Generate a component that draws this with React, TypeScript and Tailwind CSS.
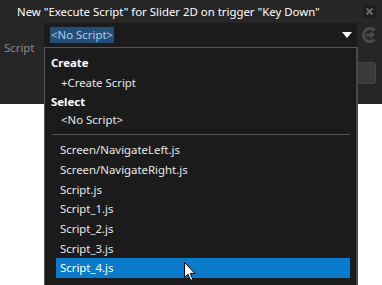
import React from "react";

const font = { fontFamily: '"Noto Sans", "Open Sans", sans-serif' };

function Cursor() {
  return (
    <svg width="13" height="20" viewBox="0 0 13 20" className="absolute left-[184px] top-[262px]">
      <path d="M0.5 0.5 L0.5 15.5 L4 12.2 L6.6 18.4 L8.8 17.5 L6.3 11.4 L11 11.4 Z" fill="#fff" stroke="#000" strokeWidth="1" strokeLinejoin="round" />
    </svg>
  );
}

export default function App() {
  const files = [
    "Screen/NavigateLeft.js",
    "Screen/NavigateRight.js",
    "Script.js",
    "Script_1.js",
    "Script_2.js",
    "Script_3.js",
    "Script_4.js",
  ];
  return (
    <div className="relative w-[382px] h-[285px] overflow-hidden bg-white text-[11.4px]" style={font}>
      <div className="bg-[#262626] h-[104px] w-full">
        <div className="flex items-center h-[23px] pl-[17px] pr-[6px]">
          <div className="flex-1 text-white leading-none">New "Execute Script" for Slider 2D on trigger "Key Down"</div>
          <div className="w-[13px] h-[13px] bg-[#1e1e1e] flex items-center justify-center">
            <svg width="9" height="9" viewBox="0 0 9 9">
              <path d="M1.5 1.5 L7.5 7.5 M7.5 1.5 L1.5 7.5" stroke="#6b6b6b" strokeWidth="1.8" />
            </svg>
          </div>
        </div>
        <div className="flex items-start">
          <div className="w-[44px] pt-[16px] pl-[4px] text-[#8a8a8a]">Script</div>
          <div className="w-[313px] h-[24px] bg-[#1b1b1b] flex items-center pl-[6px] pr-[5px]">
            <span className="bg-[#264f78] text-[#a9cdea] px-[1px] h-[16px] leading-[16px]">&lt;No Script&gt;</span>
            <div className="flex-1" />
            <svg width="10" height="6" viewBox="0 0 10 6"><path d="M0 0 L10 0 L5 6 Z" fill="#fff" /></svg>
          </div>
          <div className="ml-[5px] mt-[4px]">
            <svg width="16" height="16" viewBox="0 0 16 16">
              <path d="M12.6 3.4 A6.5 6.5 0 1 0 12.6 12.6" fill="none" stroke="#4a4a4a" strokeWidth="3" />
              <path d="M4 6.6 L8.5 6.6 L8.5 4 L13 8 L8.5 12 L8.5 9.4 L4 9.4 Z" fill="#4a4a4a" />
            </svg>
          </div>
        </div>
        <div className="flex justify-end pr-[6px] mt-[6px]">
          <div className="w-[20px] h-[22px] rounded-[3px] bg-[#3a3a3a] border border-[#454545]" />
        </div>
      </div>

      <div className="absolute left-[44px] top-[47px] w-[314px] h-[260px] bg-[#1b1b1b] border border-[#555] border-r-2 border-r-[#4a4a4a] text-[#e8e8e8]">
        <div className="pt-[5px]">
          <div className="h-[20px] flex items-center pl-[6px] font-bold text-white">Create</div>
          <div className="h-[20px] flex items-center pl-[16px]">+Create Script</div>
          <div className="h-[17px] flex items-center pl-[6px] font-bold text-white">Select</div>
          <div className="h-[20px] flex items-center pl-[16px]">&lt;No Script&gt;</div>
          <div className="mt-[4px] ml-[7px] mr-[6px] h-px bg-[#555]" />
          <div className="mt-[5px] ml-[11px] mr-[6px]">
            {files.map((f, i) => (
              <div
                key={f}
                className={`h-[19.67px] flex items-center pl-[4px] ${i === files.length - 1 ? "bg-[#0a7bcb] text-white" : ""}`}
              >
                {f}
              </div>
            ))}
          </div>
        </div>
      </div>
      <Cursor />
    </div>
  );
}
